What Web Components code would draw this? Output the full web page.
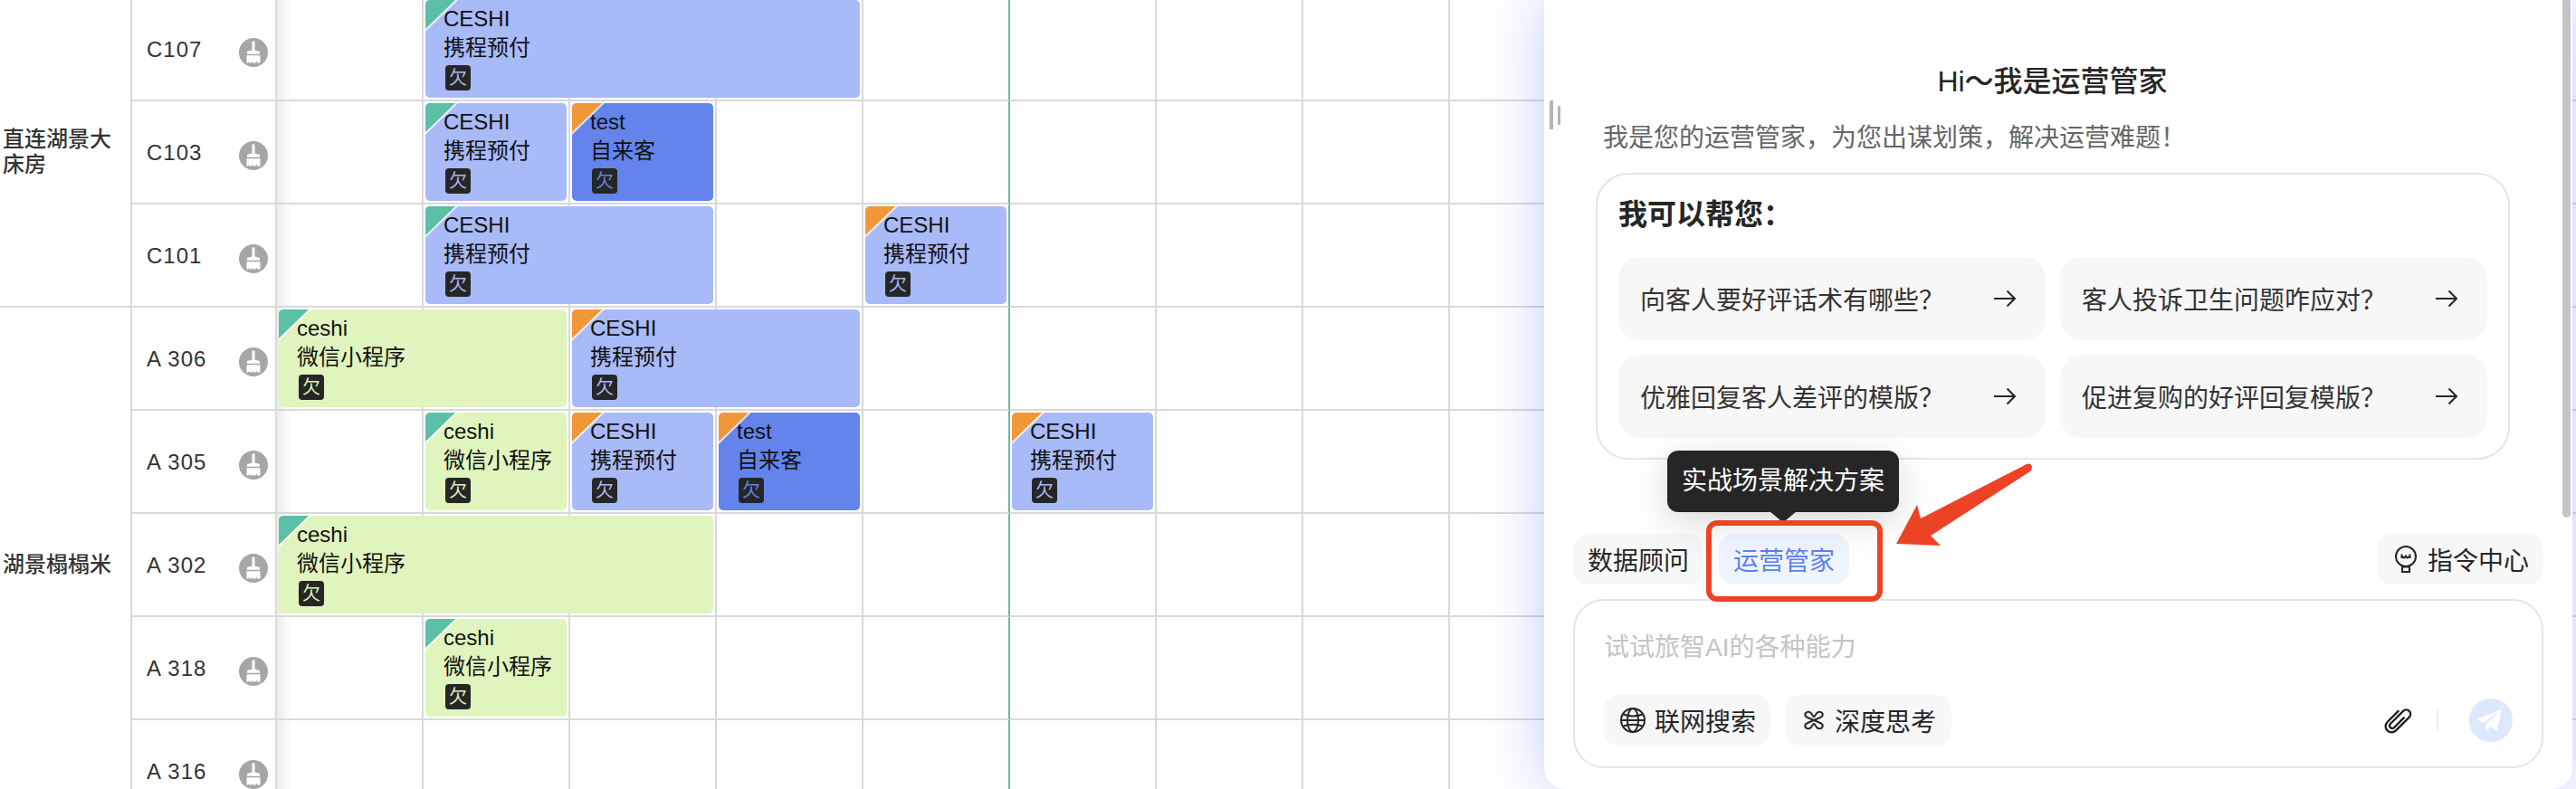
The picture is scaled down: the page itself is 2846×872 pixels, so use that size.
<!DOCTYPE html>
<html lang="zh-CN">
<head>
<meta charset="utf-8">
<title>房态</title>
<style>
  html, body { margin: 0; padding: 0; background: #fff; }
  body { width: 2846px; height: 872px; overflow: hidden; font-family: "Liberation Sans", "Noto Sans CJK SC", sans-serif; }
</style>
</head>
<body>
<ops-app></ops-app>
<script>
const TONES = {
  light: "#a9baf9",
  dark: "#6484ec",
  green: "#dff5bd"
};

const CORNERS = {
  green: "#5bc0a5",
  orange: "#f09837"
};

const GROUPS = [
  { name: "直连湖景大床房", rooms: ["C107", "C103", "C101"] },
  { name: "湖景榻榻米", rooms: ["A 306", "A 305", "A 302", "A 318", "A 316"] }
];

// row, col, span are positions on the room grid
const BOOKINGS = [
  { row: 0, col: 1, span: 3, name: "CESHI", source: "携程预付", tone: "light", corner: "green" },
  { row: 1, col: 1, span: 1, name: "CESHI", source: "携程预付", tone: "light", corner: "green" },
  { row: 1, col: 2, span: 1, name: "test", source: "自来客", tone: "dark", corner: "orange" },
  { row: 2, col: 1, span: 2, name: "CESHI", source: "携程预付", tone: "light", corner: "green" },
  { row: 2, col: 4, span: 1, name: "CESHI", source: "携程预付", tone: "light", corner: "orange" },
  { row: 3, col: 0, span: 2, name: "ceshi", source: "微信小程序", tone: "green", corner: "green" },
  { row: 3, col: 2, span: 2, name: "CESHI", source: "携程预付", tone: "light", corner: "orange" },
  { row: 4, col: 1, span: 1, name: "ceshi", source: "微信小程序", tone: "green", corner: "green" },
  { row: 4, col: 2, span: 1, name: "CESHI", source: "携程预付", tone: "light", corner: "orange" },
  { row: 4, col: 3, span: 1, name: "test", source: "自来客", tone: "dark", corner: "orange" },
  { row: 4, col: 5, span: 1, name: "CESHI", source: "携程预付", tone: "light", corner: "orange" },
  { row: 5, col: 0, span: 3, name: "ceshi", source: "微信小程序", tone: "green", corner: "green" },
  { row: 6, col: 1, span: 1, name: "ceshi", source: "微信小程序", tone: "green", corner: "green" }
];

const ROW_COUNT = 8;
const DAY_COUNT = 16;
const TODAY_COL = 4;

class CleanIcon extends HTMLElement {
  constructor() {
    super();
    this.attachShadow({ mode: "open" });
  }

  connectedCallback() {
    this.shadowRoot.innerHTML = `
      <style>
        :host { display: block; width: 32px; height: 32px; }
        svg { display: block; }
      </style>
      <svg width="32" height="32" viewBox="0 0 32 32">
        <circle cx="16" cy="16" r="16" fill="#a6a6a6"/>
        <path fill="#fff" d="M14.500 3.500h3V13.500l5.500 1.500v2.800H9V15l5.500-1.500z"/>
        <path fill="#fff" d="M8.500 19.300h15V27.500h-3.500l-.7-2.600-.8 2.600h-3l-.6-2.200-.7 2.200h-2.700l-.5-1.900-.7 1.900H8.500z"/>
      </svg>
    `;
  }
}

class BookingCard extends HTMLElement {
  constructor() {
    super();
    this.attachShadow({ mode: "open" });
  }

  get styles() {
    const tone = TONES[this.getAttribute("tone")];
    const corner = CORNERS[this.getAttribute("corner")];
    return `
      :host {
        display: block;
        position: relative;
        overflow: hidden;
        box-sizing: border-box;
        padding: 5px 0 0 20px;
        border-radius: 5px;
        background: ${tone};
        color: #111;
        font-size: 24px;
        line-height: 32px;
      }
      :host::before, :host::after {
        content: "";
        position: absolute;
        left: 0;
        top: 0;
        clip-path: polygon(0 0, 100% 0, 0 100%);
      }
      :host::before { width: 36px; height: 35px; background: #fff; opacity: .75; }
      :host::after { width: 33px; height: 32px; background: ${corner}; }
      .name, .source { white-space: nowrap; position: relative; z-index: 1; }
      .tag {
        display: flex;
        align-items: center;
        justify-content: center;
        width: 28px;
        height: 28px;
        margin: 3px 0 0 2px;
        border-radius: 4px;
        background: #262626;
        color: ${tone};
        font-size: 20px;
        line-height: 28px;
      }
    `;
  }

  connectedCallback() {
    this.shadowRoot.innerHTML = `
      <style>${this.styles}</style>
      <div class="name">${this.getAttribute("name")}</div>
      <div class="source">${this.getAttribute("source")}</div>
      <div class="tag">欠</div>
    `;
  }
}

class RoomGrid extends HTMLElement {
  constructor() {
    super();
    this.attachShadow({ mode: "open" });
  }

  get styles() {
    return `
      :host { display: block; height: 872px; overflow: hidden; }
      .grid {
        display: grid;
        grid-template-columns: 146px 160px repeat(${DAY_COUNT}, 162px);
        grid-template-rows: repeat(${ROW_COUNT}, 114px);
        margin-top: -2px;
        color: #333;
      }
      .group {
        box-sizing: border-box;
        grid-column: 1;
        display: flex;
        align-items: center;
        padding: 0 16px 0 3px;
        border-right: 2px solid #d9d9d9;
        border-bottom: 2px solid #d9d9d9;
        font-size: 24px;
        font-weight: 500;
        line-height: 28px;
      }
      .room {
        box-sizing: border-box;
        grid-column: 2;
        display: flex;
        align-items: center;
        justify-content: space-between;
        padding: 0 8px 0 16px;
        border-right: 2px solid #d9d9d9;
        border-bottom: 2px solid #d9d9d9;
        font-size: 24px;
        letter-spacing: 1px;
      }
      .room span { margin-top: 1px; }
      .room clean-icon { margin-top: 8px; }
      .cell {
        box-sizing: border-box;
        border-right: 2px solid #d9d9d9;
        border-bottom: 2px solid #d9d9d9;
      }
      .cell.first { background: linear-gradient(90deg, #ececec, #fff 16px); }
      .cell.today { border-right-color: #6fb5a0; }
      booking-card { margin: 2px 4px 4px 2px; z-index: 1; }
    `;
  }

  get markup() {
    let html = "";
    let row = 1;
    GROUPS.forEach((group) => {
      html += `<div class="group" style="grid-row: ${row} / span ${group.rooms.length}"><span>${group.name}</span></div>`;
      group.rooms.forEach((room, i) => {
        html += `<div class="room" style="grid-row: ${row + i}"><span>${room}</span><clean-icon></clean-icon></div>`;
      });
      row += group.rooms.length;
    });
    for (let r = 0; r < ROW_COUNT; r++) {
      for (let c = 0; c < DAY_COUNT; c++) {
        const cls = ["cell", c === 0 ? "first" : "", c === TODAY_COL ? "today" : ""].join(" ");
        html += `<div class="${cls}" style="grid-row: ${r + 1}; grid-column: ${c + 3}"></div>`;
      }
    }
    BOOKINGS.forEach((b) => {
      html += `<booking-card name="${b.name}" source="${b.source}" tone="${b.tone}" corner="${b.corner}"
        style="grid-row: ${b.row + 1}; grid-column: ${b.col + 3} / span ${b.span}"></booking-card>`;
    });
    return html;
  }

  connectedCallback() {
    this.shadowRoot.innerHTML = `
      <style>${this.styles}</style>
      <div class="grid">${this.markup}</div>
    `;
  }
}

class PromptTile extends HTMLElement {
  constructor() {
    super();
    this.attachShadow({ mode: "open" });
  }

  connectedCallback() {
    this.shadowRoot.innerHTML = `
      <style>
        :host {
          display: flex;
          align-items: center;
          justify-content: space-between;
          box-sizing: border-box;
          height: 92px;
          padding: 0 32px 0 24px;
          border-radius: 24px;
          background: #f7f7f7;
          color: #333;
          font-size: 28px;
        }
        svg { display: block; }
      </style>
      <span><slot></slot></span>
      <svg width="26" height="26" viewBox="0 0 26 26" fill="none" stroke="#262626" stroke-width="2">
        <path d="M1 13H24M15.500 4.500 24 13l-8.500 8.500"/>
      </svg>
    `;
  }
}

class PillButton extends HTMLElement {
  constructor() {
    super();
    this.attachShadow({ mode: "open" });
  }

  connectedCallback() {
    this.shadowRoot.innerHTML = `
      <style>
        :host {
          display: inline-flex;
          align-items: center;
          gap: var(--pill-gap, 12px);
          box-sizing: border-box;
          height: 56px;
          padding: var(--pill-pad, 0 16px);
          border-radius: 16px;
          background: #f7f7f7;
          color: #262626;
          font-size: 28px;
          white-space: nowrap;
        }
        :host([active]) { background: #eff5ff; color: #5a82f0; }
        ::slotted(svg) { display: block; flex: none; }
      </style>
      <slot name="icon"></slot>
      <slot></slot>
    `;
  }
}

class ChatComposer extends HTMLElement {
  constructor() {
    super();
    this.attachShadow({ mode: "open" });
  }

  get styles() {
    return `
      :host {
        display: block;
        box-sizing: border-box;
        width: 1072px;
        height: 187px;
        margin: 16px 0 0 32px;
        padding: 32px 32px 0 32px;
        border: 2px solid #e4e4ea;
        border-radius: 34px;
        background: #fff;
      }
      .hint { color: #c4c4c4; font-size: 28px; line-height: 40px; }
      .tools { display: flex; align-items: center; gap: 16px; margin-top: 32px; }
      .end { display: flex; align-items: center; margin-left: auto; }
      .clip { display: block; margin-right: 24px; }
      .line { width: 2px; height: 24px; background: #eeeeee; margin-right: 34px; }
      .send { display: block; }
    `;
  }

  connectedCallback() {
    this.shadowRoot.innerHTML = `
      <style>${this.styles}</style>
      <div class="hint">试试旅智AI的各种能力</div>
      <div class="tools">
        <pill-button style="--pill-pad: 0 16px 0 18px; --pill-gap: 10px">
          <svg slot="icon" width="28" height="28" viewBox="0 0 28 28" fill="none" stroke="#262626" stroke-width="2">
            <circle cx="14" cy="14" r="13"/>
            <ellipse cx="14" cy="14" rx="6" ry="13"/>
            <path d="M1 14H27M3.400 7.500C9 10 19 10 24.600 7.500M3.400 20.500C9 18 19 18 24.600 20.500"/>
          </svg>
          联网搜索
        </pill-button>
        <pill-button style="--pill-pad: 0 17px 0 20px; --pill-gap: 11px">
          <svg slot="icon" width="24" height="24" viewBox="0 0 24 24" fill="none" stroke="#262626" stroke-width="2" stroke-linecap="round">
            <path d="M11.500 8 8.800 4C6.500 1.500 2.200 2.800 2.200 6.300 2.200 7.500 3.300 8.200 5 9L19 15C20.700 15.800 21.800 16.500 21.800 17.700 21.800 21.200 17.500 22.500 15.200 20L12.500 16"/>
            <path d="M12.500 8 15.200 4C17.500 1.500 21.800 2.800 21.800 6.300 21.800 7.500 20.700 8.200 19 9L5 15C3.300 15.800 2.200 16.500 2.200 17.700 2.200 21.200 6.500 22.500 8.800 20L11.500 16"/>
          </svg>
          深度思考
        </pill-button>
        <div class="end">
          <svg class="clip" width="38" height="38" viewBox="-20 -20 40 40" fill="none" stroke="#1f1f1f" stroke-width="2.500" stroke-linecap="round">
            <path transform="rotate(45)" d="M-7 -8V10a7 7 0 0 0 14 0V-12a5 5 0 0 0-10 0V9a3 3 0 0 0 6 0V-7"/>
          </svg>
          <div class="line"></div>
          <svg class="send" width="48" height="48" viewBox="0 0 48 48">
            <circle cx="24" cy="24" r="24" fill="#dce8fb"/>
            <path fill="#fff" d="M36 12 8 23l8 4zM36 12 18 29l1 7 4-5 8 4z"/>
          </svg>
        </div>
      </div>
    `;
  }
}

class AgentPanel extends HTMLElement {
  constructor() {
    super();
    this.attachShadow({ mode: "open" });
  }

  get styles() {
    return `
      :host {
        display: block;
        position: absolute;
        left: 1706px;
        top: 0;
        width: 1136px;
        height: 872px;
        box-sizing: border-box;
        padding-top: 68px;
        border-radius: 0 0 24px 24px;
        background: #fff;
        box-shadow: 0 0 66px rgba(70, 100, 240, .34);
        color: #262626;
      }
      h1 {
        margin: 0 13px 0 0;
        font-size: 32px;
        font-weight: 500;
        line-height: 44px;
        text-align: center;
      }
      .intro { margin: 21px 0 0 65px; color: #666; font-size: 28px; line-height: 40px; }
      .card {
        box-sizing: border-box;
        width: 1010px;
        height: 317px;
        margin: 18px 0 0 57px;
        padding: 22px 23px 0;
        border: 2px solid #e4e4ea;
        border-radius: 36px;
      }
      h2 { margin: 0 0 25px; font-size: 32px; font-weight: 600; line-height: 44px; }
      .tiles { display: grid; grid-template-columns: 472px 472px; gap: 16px; }
      .tabs { display: flex; gap: 17px; width: 1072px; margin: 82px 0 0 32px; }
      .tabs .right { margin-left: auto; }
      .tip {
        position: absolute;
        left: 136px;
        top: 498px;
        box-sizing: border-box;
        width: 256px;
        height: 68px;
        border-radius: 12px;
        background: #262626;
        box-shadow: 0 10px 40px rgba(0, 0, 0, .16);
        color: #fff;
        font-size: 28px;
        line-height: 68px;
        text-align: center;
      }
      .tip::after {
        content: "";
        position: absolute;
        left: 113px;
        top: 67px;
        width: 30px;
        height: 10px;
        background: #262626;
        clip-path: polygon(0 0, 100% 0, 60% 100%, 40% 100%);
      }
      .scroll {
        position: absolute;
        right: 2px;
        top: 0;
        width: 9px;
        height: 572px;
        border-radius: 0 0 5px 5px;
        background: #c4c4c4;
      }
      .grip { position: absolute; left: 6px; top: 111px; display: block; }
      .mark { position: absolute; left: 0; top: 0; display: block; pointer-events: none; }
    `;
  }

  connectedCallback() {
    this.shadowRoot.innerHTML = `
      <style>${this.styles}</style>
      <h1>Hi～我是运营管家</h1>
      <div class="intro">我是您的运营管家，为您出谋划策，解决运营难题！</div>
      <div class="card">
        <h2>我可以帮您：</h2>
        <div class="tiles">
          <prompt-tile>向客人要好评话术有哪些？</prompt-tile>
          <prompt-tile>客人投诉卫生问题咋应对？</prompt-tile>
          <prompt-tile>优雅回复客人差评的模版？</prompt-tile>
          <prompt-tile>促进复购的好评回复模版？</prompt-tile>
        </div>
      </div>
      <div class="tabs">
        <pill-button>数据顾问</pill-button>
        <pill-button active>运营管家</pill-button>
        <pill-button class="right" style="--pill-pad: 0 16px 0 20px">
          <svg slot="icon" width="24" height="30" viewBox="0 0 24 30" fill="none" stroke="#262626" stroke-width="2">
            <circle cx="12" cy="12" r="11"/>
            <path d="M8 23.500h8v5.500H8z"/>
            <path d="M7.500 9.500v4.500M16.500 9.500v4.500M7.500 12l3 1.500L12 11.500l1.500 2 3-1.500"/>
          </svg>
          指令中心
        </pill-button>
      </div>
      <chat-composer></chat-composer>
      <div class="scroll"></div>
      <svg class="grip" width="12" height="32" viewBox="0 0 12 32">
        <rect x="0" y="0" width="4" height="32" rx="1" fill="#b4b4b4"/>
        <rect x="9" y="6" width="3" height="21" rx="1" fill="#b4b4b4"/>
      </svg>
      <div class="tip">实战场景解决方案</div>
      <svg class="mark" width="1136" height="872" viewBox="1706 0 1136 872">
        <rect x="1888" y="578" width="189" height="84" rx="9" fill="none" stroke="#ec4325" stroke-width="6"/>
        <path fill="#ec4325" d="M2095 601 2118 558 2122 573 2239 513Q2244 511 2245 516 2245 519 2243 521L2133 592 2144 603Q2120 602 2095 601Z"/>
      </svg>
    `;
  }
}

class OpsApp extends HTMLElement {
  constructor() {
    super();
    this.attachShadow({ mode: "open" });
  }

  connectedCallback() {
    this.shadowRoot.innerHTML = `
      <style>
        :host { display: block; position: relative; width: 2846px; height: 872px; overflow: hidden; }
      </style>
      <room-grid></room-grid>
      <agent-panel></agent-panel>
    `;
  }
}

customElements.define("clean-icon", CleanIcon);
customElements.define("booking-card", BookingCard);
customElements.define("room-grid", RoomGrid);
customElements.define("prompt-tile", PromptTile);
customElements.define("pill-button", PillButton);
customElements.define("chat-composer", ChatComposer);
customElements.define("agent-panel", AgentPanel);
customElements.define("ops-app", OpsApp);
</script>
</body>
</html>
